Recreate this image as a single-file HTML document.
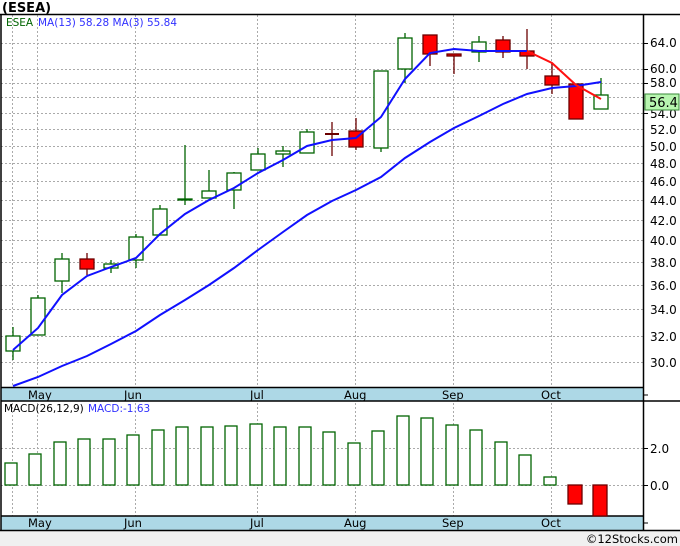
<!DOCTYPE html>
<html><head><meta charset="utf-8"><style>
html,body{margin:0;padding:0;background:#fff}
svg{display:block}
text{font-family:"DejaVu Sans","Liberation Sans",sans-serif}
</style></head><body>
<svg width="680" height="546" xmlns="http://www.w3.org/2000/svg">
<rect width="680" height="546" fill="#fff"/>
<text x="2" y="12" font-size="13" font-weight="bold" fill="#000">(ESEA)</text>
<rect x="0" y="531" width="680" height="15" fill="#f0f0f0"/>
<text x="678" y="543" font-size="11.5" text-anchor="end" fill="#000">©12Stocks.com</text>
<g stroke="#aaa" stroke-dasharray="2,2" stroke-width="1">
<line x1="1" x2="643" y1="43.5" y2="43.5"/><line x1="1" x2="643" y1="69.5" y2="69.5"/><line x1="1" x2="643" y1="83.5" y2="83.5"/><line x1="1" x2="643" y1="97.5" y2="97.5"/><line x1="1" x2="643" y1="113.5" y2="113.5"/><line x1="1" x2="643" y1="129.5" y2="129.5"/><line x1="1" x2="643" y1="146.5" y2="146.5"/><line x1="1" x2="643" y1="163.5" y2="163.5"/><line x1="1" x2="643" y1="181.5" y2="181.5"/><line x1="1" x2="643" y1="200.5" y2="200.5"/><line x1="1" x2="643" y1="220.5" y2="220.5"/><line x1="1" x2="643" y1="240.5" y2="240.5"/><line x1="1" x2="643" y1="262.5" y2="262.5"/><line x1="1" x2="643" y1="285.5" y2="285.5"/><line x1="1" x2="643" y1="309.5" y2="309.5"/><line x1="1" x2="643" y1="336.5" y2="336.5"/><line x1="1" x2="643" y1="362.5" y2="362.5"/>
<line x1="1" x2="643" y1="448.5" y2="448.5"/><line x1="1" x2="643" y1="485.5" y2="485.5"/>
<line x1="12.5" x2="12.5" y1="15" y2="530"/><line x1="37.5" x2="37.5" y1="15" y2="530"/><line x1="135.5" x2="135.5" y1="15" y2="530"/><line x1="257.5" x2="257.5" y1="15" y2="530"/><line x1="355.5" x2="355.5" y1="15" y2="530"/><line x1="453.5" x2="453.5" y1="15" y2="530"/><line x1="551.5" x2="551.5" y1="15" y2="530"/>
</g>
<rect x="1" y="387" width="642" height="14" fill="#add8e6"/>
<rect x="1" y="516" width="642" height="14" fill="#add8e6"/>
<g stroke="#000" stroke-width="1.5">
<line x1="0" x2="680" y1="14.5" y2="14.5"/>
<line x1="1" x2="1" y1="14" y2="531"/>
<line x1="643.5" x2="643.5" y1="14" y2="531"/>
<line x1="1" x2="643" y1="387.5" y2="387.5"/>
<line x1="1" x2="680" y1="401" y2="401"/>
<line x1="1" x2="643" y1="516" y2="516"/>
<line x1="0" x2="680" y1="530.5" y2="530.5"/>
</g>
<g font-size="11.5" fill="#000">
<text x="28" y="399">May</text><text x="124" y="399">Jun</text><text x="250" y="399">Jul</text><text x="344" y="399">Aug</text><text x="442" y="399">Sep</text><text x="541" y="399">Oct</text>
<text x="28" y="527">May</text><text x="124" y="527">Jun</text><text x="250" y="527">Jul</text><text x="344" y="527">Aug</text><text x="442" y="527">Sep</text><text x="541" y="527">Oct</text>
</g>
<g font-size="12" fill="#000">
<text x="650" y="47">64.0</text><text x="650" y="73">60.0</text><text x="650" y="87">58.0</text><text x="650" y="118">54.0</text><text x="650" y="134">52.0</text><text x="650" y="151">50.0</text><text x="650" y="168">48.0</text><text x="650" y="186">46.0</text><text x="650" y="205">44.0</text><text x="650" y="225">42.0</text><text x="650" y="245">40.0</text><text x="650" y="267">38.0</text><text x="650" y="290">36.0</text><text x="650" y="314">34.0</text><text x="650" y="341">32.0</text><text x="650" y="367">30.0</text>
<text x="650" y="453">2.0</text><text x="650" y="490">0.0</text>
</g>
<rect x="645" y="94" width="34" height="16" fill="#b8f5b0" stroke="#3a8a3a"/>
<text x="649" y="107" font-size="13" fill="#000">56.4</text>
<g stroke="#000"><line x1="643" x2="648" y1="43.5" y2="43.5"/><line x1="643" x2="648" y1="69.5" y2="69.5"/><line x1="643" x2="648" y1="83.5" y2="83.5"/><line x1="643" x2="648" y1="113.5" y2="113.5"/><line x1="643" x2="648" y1="448.5" y2="448.5"/><line x1="643" x2="648" y1="485.5" y2="485.5"/><line x1="643" x2="648" y1="395" y2="395"/><line x1="643" x2="648" y1="523" y2="523"/></g>
<text x="6" y="26" font-size="10.5" fill="#006400">ESEA</text>
<text x="38" y="26" font-size="10.5" fill="#3030ff">MA(13)  58.28   MA(3)  55.84</text>
<text x="4" y="412" font-size="10.5" fill="#000">MACD(26,12,9)</text>
<text x="88" y="412" font-size="10.5" fill="#3030ff">MACD:-1.63</text>
<g stroke="#006400" stroke-width="1.3">
<line x1="13" x2="13" y1="327" y2="360"/><line x1="38" x2="38" y1="295" y2="298"/><line x1="62" x2="62" y1="253" y2="293"/><line x1="111" x2="111" y1="260" y2="273"/><line x1="136" x2="136" y1="234" y2="268"/><line x1="160" x2="160" y1="205" y2="209"/><line x1="185" x2="185" y1="145" y2="205"/><line x1="209" x2="209" y1="170" y2="198"/><line x1="234" x2="234" y1="172" y2="209"/><line x1="258" x2="258" y1="148" y2="154"/><line x1="283" x2="283" y1="146" y2="167"/><line x1="307" x2="307" y1="129" y2="132"/><line x1="381" x2="381" y1="148" y2="152"/><line x1="405" x2="405" y1="33" y2="83"/><line x1="479" x2="479" y1="36" y2="62"/><line x1="601" x2="601" y1="78" y2="95"/>
</g>
<g stroke="#6b0000" stroke-width="1.3">
<line x1="87" x2="87" y1="253" y2="275"/><line x1="332" x2="332" y1="122" y2="156"/><line x1="356" x2="356" y1="118" y2="150"/><line x1="430" x2="430" y1="54" y2="66"/><line x1="454" x2="454" y1="56" y2="74"/><line x1="503" x2="503" y1="36" y2="58"/><line x1="527" x2="527" y1="29" y2="69"/><line x1="552" x2="552" y1="63" y2="94"/>
<line x1="325" x2="339" y1="134" y2="134" stroke-width="2"/>
</g>
<g fill="#fff" stroke="#006400" stroke-width="1.3">
<rect x="6" y="336" width="14" height="15"/><rect x="31" y="298" width="14" height="37"/><rect x="55" y="259" width="14" height="22"/><rect x="104" y="264" width="14" height="4"/><rect x="129" y="237" width="14" height="23"/><rect x="153" y="209" width="14" height="26"/><rect x="178" y="199" width="14" height="1"/><rect x="202" y="191" width="14" height="7"/><rect x="227" y="173" width="14" height="17"/><rect x="251" y="154" width="14" height="16"/><rect x="276" y="151" width="14" height="3"/><rect x="300" y="132" width="14" height="21"/><rect x="374" y="71" width="14" height="77"/><rect x="398" y="38" width="14" height="31"/><rect x="472" y="42" width="14" height="10"/><rect x="594" y="95" width="14" height="14"/>
</g>
<g fill="#ff0000" stroke="#6b0000" stroke-width="1.3">
<rect x="80" y="259" width="14" height="10"/><rect x="349" y="131" width="14" height="16"/><rect x="423" y="35" width="14" height="19"/><rect x="447" y="54" width="14" height="2"/><rect x="496" y="40" width="14" height="12"/><rect x="520" y="51" width="14" height="5"/><rect x="545" y="76" width="14" height="9"/><rect x="569" y="84" width="14" height="35"/>
</g>
<polyline fill="none" stroke="#1010ff" stroke-width="2" points="13,386 38,377 62,366 87,356 111,344 136,331 160,315 185,300 209,285 234,268 258,250 283,232 307,215 332,201 356,190 381,177 405,158 430,142 454,128 479,116 503,104 527,94 552,88 576,86 601,82"/>
<polyline fill="none" stroke="#1010ff" stroke-width="2" points="13,350 38,328 62,295 87,276 111,267 136,258 160,234 185,214 209,200 234,188 258,173 283,160 307,146 332,140 356,138 381,117 405,79 430,53 454,49 479,51 503,51 527,51"/>
<polyline fill="none" stroke="#ff1010" stroke-width="2" points="527,51 552,63 576,85 601,99"/>
<g fill="#fff" stroke="#006400" stroke-width="1.3">
<rect x="5" y="463" width="12" height="22"/><rect x="29" y="454" width="12" height="31"/><rect x="54" y="442" width="12" height="43"/><rect x="78" y="439" width="12" height="46"/><rect x="103" y="439" width="12" height="46"/><rect x="127" y="435" width="12" height="50"/><rect x="152" y="430" width="12" height="55"/><rect x="176" y="427" width="12" height="58"/><rect x="201" y="427" width="12" height="58"/><rect x="225" y="426" width="12" height="59"/><rect x="250" y="424" width="12" height="61"/><rect x="274" y="427" width="12" height="58"/><rect x="299" y="427" width="12" height="58"/><rect x="323" y="432" width="12" height="53"/><rect x="348" y="443" width="12" height="42"/><rect x="372" y="431" width="12" height="54"/><rect x="397" y="416" width="12" height="69"/><rect x="421" y="418" width="12" height="67"/><rect x="446" y="425" width="12" height="60"/><rect x="470" y="430" width="12" height="55"/><rect x="495" y="442" width="12" height="43"/><rect x="519" y="455" width="12" height="30"/><rect x="544" y="477" width="12" height="8"/>
</g>
<g fill="#ff0000" stroke="#6b0000" stroke-width="1.3">
<rect x="568" y="485" width="14" height="19"/><rect x="593" y="485" width="14" height="31"/>
</g>
</svg>
</body></html>
